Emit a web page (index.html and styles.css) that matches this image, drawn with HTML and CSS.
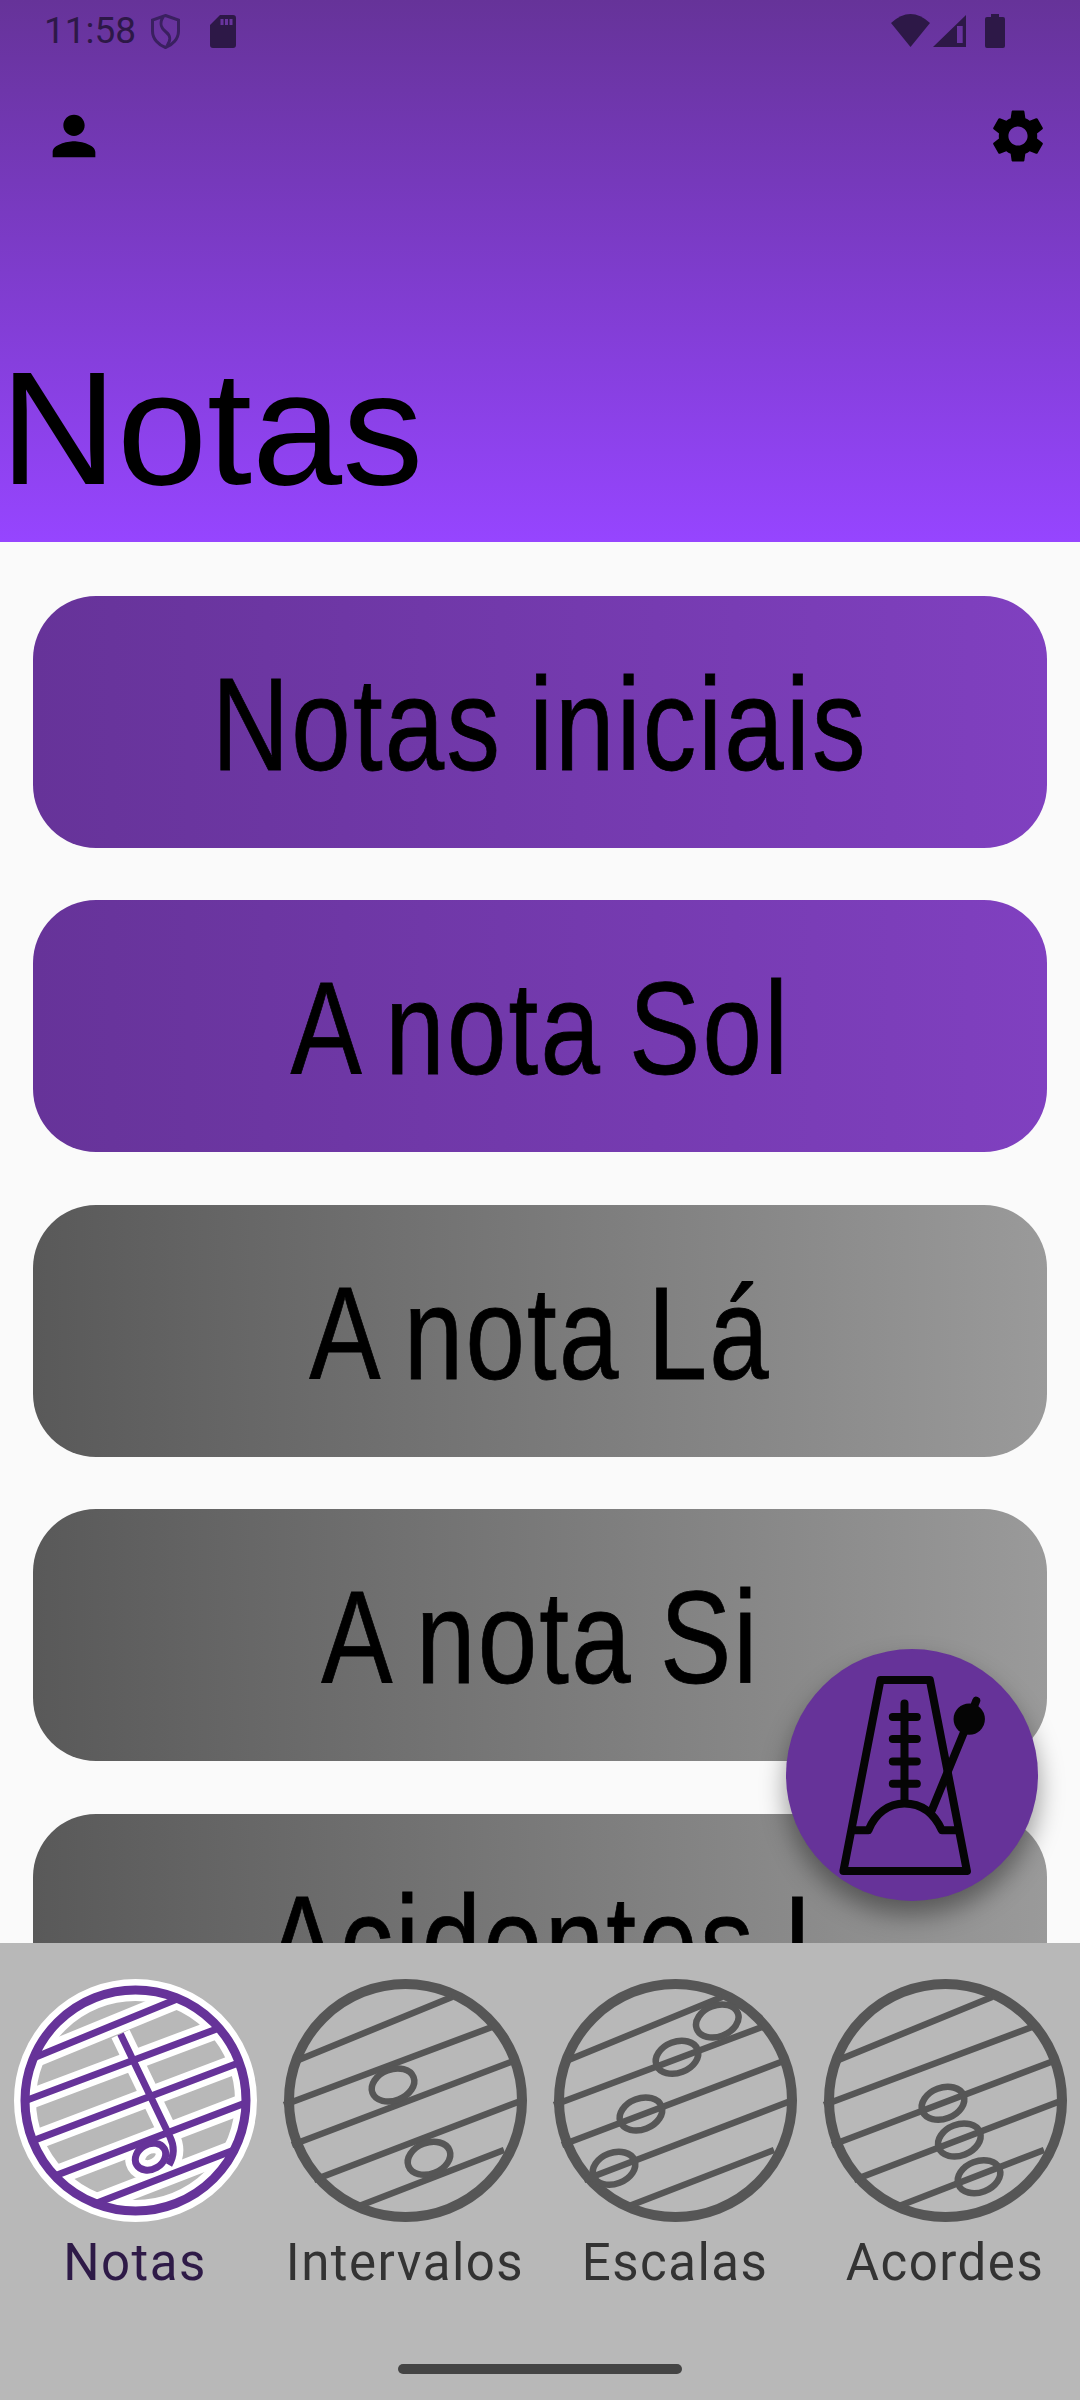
FILE: index.html
```html
<!DOCTYPE html>
<html lang="pt">
<head>
  <meta charset="UTF-8" />
  <meta name="viewport" content="width=device-width, initial-scale=1" />
  <title>Notas</title>
  <link rel="stylesheet" href="styles.css">
</head>
<body>

<div class="app">
  <header class="top">
    <div class="status">
      <span class="clock">11:58</span>
      <svg class="shield" viewBox="0 0 29 35"><path d="M14.5 1.5 27.5 6V17C27.5 25 21.5 31 14.5 33.5 7.5 31 1.5 25 1.5 17V6Z"/><path d="M12 3C8 10 10 14 15 18 20 22 20 26 16 32"/></svg>
      <svg class="sd" viewBox="0 0 26 33"><path fill-rule="evenodd" d="M10 0H23A3 3 0 0 1 26 3V30A3 3 0 0 1 23 33H3A3 3 0 0 1 0 30V10ZM10.500 4V10H13.500V4ZM15 4V10H18V4ZM19.500 4V10H22.500V4Z"/></svg>
      <span class="status-space"></span>
      <svg class="wifi" viewBox="0 0 39 33"><path d="M19.500 33 0 9Q19.500 -9 39 9Z"/></svg>
      <svg class="signal" viewBox="0 0 33 32"><path fill-rule="evenodd" d="M0 32 33 0V32ZM24 11V28H29.700V11Z"/></svg>
      <svg class="battery" viewBox="0 0 20 34"><path d="M6 0H14V3H18A2 2 0 0 1 20 5V32A2 2 0 0 1 18 34H2A2 2 0 0 1 0 32V5A2 2 0 0 1 2 3H6Z"/></svg>
    </div>
    <div class="actions">
      <svg class="action" viewBox="0 0 24 24"><path d="M12 12c2.210 0 4-1.790 4-4s-1.790-4-4-4-4 1.790-4 4 1.790 4 4 4zm0 2c-2.670 0-8 1.340-8 4v2h16v-2c0-2.660-5.330-4-8-4z"/></svg>
      <svg class="action" viewBox="0 0 24 24"><path d="M19.140 12.940c.04-.3.060-.61.060-.94 0-.32-.02-.64-.07-.94l2.030-1.580c.18-.14.230-.41.120-.61l-1.920-3.320c-.12-.22-.37-.29-.59-.22l-2.390.96c-.5-.38-1.030-.7-1.620-.94L14.400 2.810c-.04-.24-.24-.41-.48-.41h-3.840c-.24 0-.43.17-.47.41L9.250 5.350C8.660 5.590 8.120 5.920 7.630 6.290L5.240 5.330c-.22-.08-.47 0-.59.22L2.740 8.870C2.620 9.080 2.660 9.340 2.860 9.480l2.030 1.580C4.840 11.360 4.800 11.690 4.800 12s.02.64.07.94l-2.030 1.580c-.18.14-.23.41-.12.61l1.920 3.320c.12.22.37.29.59.22l2.390-.96c.5.38 1.030.7 1.620.94l.36 2.540c.05.24.24.41.48.41h3.840c.24 0 .44-.17.47-.41l.36-2.540c.59-.24 1.130-.56 1.620-.94l2.390.96c.22.08.47 0 .59-.22l1.920-3.320c.12-.22.07-.47-.12-.61L19.140 12.940zM12 15.600c-1.980 0-3.600-1.620-3.600-3.600s1.620-3.600 3.600-3.600 3.600 1.620 3.600 3.600-1.620 3.600-3.600 3.600z"/></svg>
    </div>
    <h1 class="title">Notas</h1>
  </header>

  <main class="content">
    <div class="list">
      <a class="card card-open"><span class="card-text">Notas iniciais</span></a>
      <a class="card card-open"><span class="card-text">A nota Sol</span></a>
      <a class="card card-locked"><span class="card-text">A nota Lá</span></a>
      <a class="card card-locked"><span class="card-text">A nota Si</span></a>
      <a class="card card-locked"><span class="card-text">Acidentes I</span></a>
    </div>

    <button class="fab" type="button">
      <svg viewBox="78 87 755 755">
        <g class="metronome">
          <path d="M361 180H509L620 752H250Z"/>
          <path d="M433 250V545M398 291H470M398 357H470M398 424H470M398 491H470"/>
          <path d="M285 630H325C345 580 385 550 433 550 485 550 522 580 545 630H590"/>
          <path d="M515 570 622 310M640 262 648 242"/>
        </g>
        <circle class="metronome-ball" cx="627" cy="297" r="47"/>
      </svg>
    </button>
  </main>

  <nav class="tabs">
    <div class="tab tab-active">
      <svg class="tab-icon" viewBox="0 0 243 243">
        <defs>
          <g id="staff">
            <path d="M12 82 168 18M0 126 208 48M8 166 227 83M30 201 234 123M70 229 220 171"/>
          </g>
          <clipPath id="inside-ring">
            <circle cx="121.500" cy="121.500" r="110.500"/>
          </clipPath>
        </defs>
        <g class="halo">
          <circle cx="121.500" cy="121.500" r="110.500"/>
          <use href="#staff" clip-path="url(#inside-ring)"/>
          <path d="M106.500 55 156 158Q163 172 155 186"/>
          <ellipse cx="136.500" cy="177.700" rx="16" ry="12.500" transform="rotate(-30 136.500 177.700)"/>
        </g>
        <g class="ink">
          <use href="#staff" clip-path="url(#inside-ring)"/>
          <path d="M106.500 55 156 158Q163 172 155 186"/>
          <ellipse cx="136.500" cy="177.700" rx="16" ry="12.500" transform="rotate(-30 136.500 177.700)"/>
          <circle class="ring" cx="121.500" cy="121.500" r="110.500"/>
        </g>
      </svg>
      <span class="tab-label">Notas</span>
    </div>
    <div class="tab">
      <svg class="tab-icon" viewBox="0 0 243 243">
        <g class="ink">
          <circle class="ring" cx="121.500" cy="121.500" r="116.500"/>
          <use href="#staff"/>
          <ellipse cx="109" cy="106" rx="22" ry="15.500" transform="rotate(-21 109 106)"/>
          <ellipse cx="145" cy="179.300" rx="22" ry="15.500" transform="rotate(-21 145 179.300)"/>
        </g>
      </svg>
      <span class="tab-label">Intervalos</span>
    </div>
    <div class="tab">
      <svg class="tab-icon" viewBox="0 0 243 243">
        <g class="ink">
          <circle class="ring" cx="121.500" cy="121.500" r="116.500"/>
          <use href="#staff"/>
          <ellipse cx="163.300" cy="42" rx="22" ry="15.500" transform="rotate(-21 163.300 42)"/>
          <ellipse cx="123" cy="78.300" rx="22" ry="15.500" transform="rotate(-21 123 78.300)"/>
          <ellipse cx="86.900" cy="135" rx="22" ry="15.500" transform="rotate(-21 86.900 135)"/>
          <ellipse cx="60" cy="189.300" rx="22" ry="15.500" transform="rotate(-21 60 189.300)"/>
        </g>
      </svg>
      <span class="tab-label">Escalas</span>
    </div>
    <div class="tab">
      <svg class="tab-icon" viewBox="0 0 243 243">
        <g class="ink">
          <circle class="ring" cx="121.500" cy="121.500" r="116.500"/>
          <use href="#staff"/>
          <ellipse cx="119" cy="124.300" rx="22" ry="15.500" transform="rotate(-21 119 124.300)"/>
          <ellipse cx="135.300" cy="161" rx="22" ry="15.500" transform="rotate(-21 135.300 161)"/>
          <ellipse cx="155" cy="197.700" rx="22" ry="15.500" transform="rotate(-21 155 197.700)"/>
        </g>
      </svg>
      <span class="tab-label">Acordes</span>
    </div>
    <div class="home-bar"></div>
  </nav>
</div>

</body>
</html>
```

FILE: styles.css
```css
* {
  box-sizing: border-box;
}

body {
  margin: 0;
  background: #fafafa;
  font-family: "Liberation Sans", Arial, sans-serif;
  color: #000;
}

.app {
  width: 1080px;
  height: 2400px;
  display: flex;
  flex-direction: column;
  overflow: hidden;
}

/* header */
.top {
  height: 542px;
  flex: none;
  display: flex;
  flex-direction: column;
  background: linear-gradient(180deg, #663399, #9645ff);
}

.status {
  height: 62px;
  padding: 14px 75px 0 44px;
  display: flex;
  align-items: flex-start;
  color: #2d1847;
}
.status svg {
  fill: currentColor;
  flex: none;
}
.clock {
  font-family: Roboto, sans-serif;
  font-size: 37px;
  line-height: 34px;
  width: 107px;
}
.shield {
  width: 29px;
  height: 35px;
  margin-right: 30px;
}
.status .shield {
  fill: none;
  stroke: #3a2060;
  stroke-width: 3;
}
.sd {
  width: 26px;
  height: 33px;
  margin-top: 1px;
}
.status-space {
  flex: 1;
}
.wifi {
  width: 39px;
  height: 33px;
}
.signal {
  width: 33px;
  height: 32px;
  margin: 1px 19px 0 3px;
}
.battery {
  width: 20px;
  height: 34px;
}

.actions {
  padding: 42px 30px 0 42px;
  display: flex;
  justify-content: space-between;
}
.action {
  width: 64px;
  height: 64px;
}

.title {
  margin: auto 0 0;
  font-size: 162px;
  font-weight: 400;
  line-height: 186px;
  padding-bottom: 21px;
}

/* cards */
.content {
  flex: 1;
  position: relative;
  min-height: 0;
}
.list {
  height: 100%;
  overflow: hidden;
  padding: 54px 33px 0;
  display: flex;
  flex-direction: column;
  gap: 52.400px;
}
.card {
  flex: none;
  height: 252px;
  border-radius: 63px;
  padding-top: 5px;
  display: flex;
  align-items: center;
  justify-content: center;
}
.card-open {
  background: linear-gradient(90deg, #663399, #8040c0);
}
.card-locked {
  background: linear-gradient(90deg, #595959, #9a9a9a);
}
.card-text {
  display: inline-block;
  font-size: 132px;
  white-space: nowrap;
  letter-spacing: 2.700px;
  word-spacing: -6px;
  -webkit-text-stroke: 0.8px #000;
  transform: scaleX(0.81);
}

.fab {
  position: absolute;
  right: 42px;
  bottom: 42px;
  width: 252px;
  height: 252px;
  padding: 0;
  border: none;
  border-radius: 50%;
  background: #663399;
  box-shadow: 0 14px 26px rgba(0, 0, 0, 0.4);
}
.fab svg {
  display: block;
  width: 100%;
  height: 100%;
}
.metronome {
  fill: none;
  stroke: #050505;
  stroke-width: 24;
  stroke-linecap: round;
  stroke-linejoin: round;
}
.metronome-ball {
  fill: #050505;
}

/* bottom tabs */
.tabs {
  height: 457px;
  flex: none;
  position: relative;
  display: grid;
  grid-template-columns: repeat(4, 270px);
  align-content: start;
  padding-top: 36px;
  background: #b8b8b8;
}
.tab {
  display: flex;
  flex-direction: column;
  align-items: center;
}
.tab-icon {
  width: 243px;
  height: 243px;
  overflow: visible;
}
.tab-icon g {
  fill: none;
  stroke-linecap: butt;
}
.ink {
  stroke: #565656;
  stroke-width: 6.500;
}
.ring {
  stroke-width: 10;
}
.tab-active .halo {
  stroke: #fff;
  stroke-width: 20;
}
.tab-active .halo circle {
  stroke-width: 22;
}
.tab-active .ink {
  stroke: #663399;
  stroke-width: 7;
}
.tab-active .ring {
  stroke-width: 9;
}
.tab-label {
  margin-top: 13px;
  font-family: Roboto, sans-serif;
  font-size: 51px;
  line-height: 56px;
  letter-spacing: 1.500px;
  color: #333;
}
.tab-active .tab-label {
  color: #2e1a47;
}
.home-bar {
  position: absolute;
  left: 398px;
  bottom: 26px;
  width: 284px;
  height: 10px;
  border-radius: 5px;
  background: #444;
}
```
